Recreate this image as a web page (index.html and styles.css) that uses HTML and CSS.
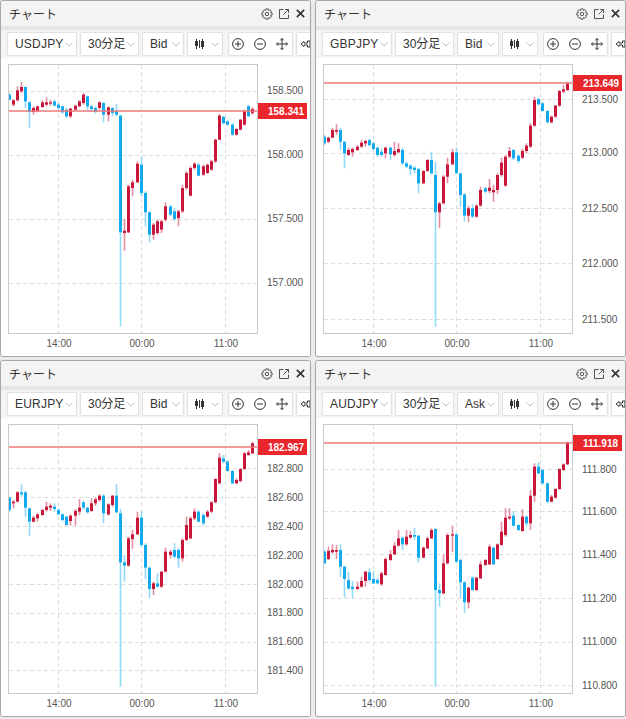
FILE: index.html
```html
<!DOCTYPE html>
<html lang="ja">
<head>
<meta charset="utf-8">
<title>チャート</title>
<link rel="stylesheet" href="styles.css">
</head>
<body>
<svg class="sprite" xmlns="http://www.w3.org/2000/svg">
  <symbol id="i-gear" viewBox="0 0 12 12">
    <polygon points="9.67,4.67 11.09,4.92 11.09,7.08 9.67,7.33 9.53,7.65 10.36,8.83 8.83,10.36 7.65,9.53 7.33,9.67 7.08,11.09 4.92,11.09 4.67,9.67 4.35,9.53 3.17,10.36 1.64,8.83 2.47,7.65 2.33,7.33 0.91,7.08 0.91,4.92 2.33,4.67 2.47,4.35 1.64,3.17 3.17,1.64 4.35,2.47 4.67,2.33 4.92,0.91 7.08,0.91 7.33,2.33 7.65,2.47 8.83,1.64 10.36,3.17 9.53,4.35" fill="none" stroke="currentColor" stroke-width="1" stroke-linejoin="round"/>
    <circle cx="6" cy="6" r="1.7" fill="none" stroke="currentColor" stroke-width="1"/>
  </symbol>
  <symbol id="i-pop" viewBox="0 0 12 12">
    <path d="M5.5 1.5H1.5V10.5H10.5V6.5" fill="none" stroke="currentColor" stroke-width="1"/>
    <path d="M5.5 6.5L10.5 1.5M7 1.5H10.5V5" fill="none" stroke="currentColor" stroke-width="1"/>
  </symbol>
  <symbol id="i-close" viewBox="0 0 12 12">
    <path d="M2 2L10 10M10 2L2 10" fill="none" stroke="currentColor" stroke-width="1.8"/>
  </symbol>
  <symbol id="i-chev" viewBox="0 0 8 5">
    <polyline points="0.5,0.5 4,4 7.5,0.5" fill="none" stroke="currentColor" stroke-width="1"/>
  </symbol>
  <symbol id="i-candles" viewBox="0 0 9 10">
    <path d="M1.5 0V10M4.5 1V9M7.5 0V10" stroke="currentColor" stroke-width="1"/>
    <rect x="0" y="2" width="3" height="5" fill="currentColor"/>
    <rect x="4" y="3" width="1" height="4" fill="currentColor"/>
    <rect x="6" y="2" width="3" height="6" fill="currentColor"/>
  </symbol>
  <symbol id="i-plus" viewBox="0 0 12 12">
    <circle cx="6" cy="6" r="5.4" fill="none" stroke="currentColor" stroke-width="1"/>
    <path d="M3 6H9M6 3V9" stroke="currentColor" stroke-width="1"/>
  </symbol>
  <symbol id="i-minus" viewBox="0 0 12 12">
    <circle cx="6" cy="6" r="5.4" fill="none" stroke="currentColor" stroke-width="1"/>
    <path d="M3 6H9" stroke="currentColor" stroke-width="1"/>
  </symbol>
  <symbol id="i-move" viewBox="0 0 12 12">
    <path d="M6 0.5V11.5M0.5 6H11.5M4.3 2.2L6 0.5L7.7 2.2M4.3 9.8L6 11.5L7.7 9.8M2.2 4.3L0.5 6L2.2 7.7M9.8 4.3L11.5 6L9.8 7.7" fill="none" stroke="currentColor" stroke-width="1"/>
  </symbol>
  <symbol id="i-pin" viewBox="0 0 12 12">
    <path d="M1 6L4 3.5V5H7.5V3L10 3V9H7.5V7H4V8.5Z" fill="none" stroke="currentColor" stroke-width="1" stroke-linejoin="round"/>
  </symbol>
</svg>

<main class="board">
  <section class="panel">
    <header class="titlebar">
      <span class="title">チャート</span>
      <div class="title-tools">
        <svg class="ico ico-gear"><use href="#i-gear"/></svg>
        <svg class="ico ico-pop"><use href="#i-pop"/></svg>
        <svg class="ico ico-close"><use href="#i-close"/></svg>
      </div>
    </header>
    <div class="strip"></div>
    <div class="toolbar">
      <div class="btn btn-sym"><span class="btn-text sym">USDJPY</span><svg class="chev"><use href="#i-chev"/></svg></div>
      <div class="btn btn-tf"><span class="btn-text">30分足</span><svg class="chev"><use href="#i-chev"/></svg></div>
      <div class="btn btn-side"><span class="btn-text">Bid</span><svg class="chev"><use href="#i-chev"/></svg></div>
      <div class="btn btn-type"><svg class="ico-candles"><use href="#i-candles"/></svg><svg class="chev"><use href="#i-chev"/></svg></div>
      <div class="btn btn-tools"><svg class="tool"><use href="#i-plus"/></svg><svg class="tool"><use href="#i-minus"/></svg><svg class="tool"><use href="#i-move"/></svg></div>
      <div class="btn btn-more"><svg class="tool"><use href="#i-pin"/></svg></div>
    </div>
    <div class="chart-area"><svg class="chart" data-chart="0" width="302" height="290"></svg></div>
  </section>

  <section class="panel">
    <header class="titlebar">
      <span class="title">チャート</span>
      <div class="title-tools">
        <svg class="ico ico-gear"><use href="#i-gear"/></svg>
        <svg class="ico ico-pop"><use href="#i-pop"/></svg>
        <svg class="ico ico-close"><use href="#i-close"/></svg>
      </div>
    </header>
    <div class="strip"></div>
    <div class="toolbar">
      <div class="btn btn-sym"><span class="btn-text sym">GBPJPY</span><svg class="chev"><use href="#i-chev"/></svg></div>
      <div class="btn btn-tf"><span class="btn-text">30分足</span><svg class="chev"><use href="#i-chev"/></svg></div>
      <div class="btn btn-side"><span class="btn-text">Bid</span><svg class="chev"><use href="#i-chev"/></svg></div>
      <div class="btn btn-type"><svg class="ico-candles"><use href="#i-candles"/></svg><svg class="chev"><use href="#i-chev"/></svg></div>
      <div class="btn btn-tools"><svg class="tool"><use href="#i-plus"/></svg><svg class="tool"><use href="#i-minus"/></svg><svg class="tool"><use href="#i-move"/></svg></div>
      <div class="btn btn-more"><svg class="tool"><use href="#i-pin"/></svg></div>
    </div>
    <div class="chart-area"><svg class="chart" data-chart="1" width="302" height="290"></svg></div>
  </section>

  <section class="panel">
    <header class="titlebar">
      <span class="title">チャート</span>
      <div class="title-tools">
        <svg class="ico ico-gear"><use href="#i-gear"/></svg>
        <svg class="ico ico-pop"><use href="#i-pop"/></svg>
        <svg class="ico ico-close"><use href="#i-close"/></svg>
      </div>
    </header>
    <div class="strip"></div>
    <div class="toolbar">
      <div class="btn btn-sym"><span class="btn-text sym">EURJPY</span><svg class="chev"><use href="#i-chev"/></svg></div>
      <div class="btn btn-tf"><span class="btn-text">30分足</span><svg class="chev"><use href="#i-chev"/></svg></div>
      <div class="btn btn-side"><span class="btn-text">Bid</span><svg class="chev"><use href="#i-chev"/></svg></div>
      <div class="btn btn-type"><svg class="ico-candles"><use href="#i-candles"/></svg><svg class="chev"><use href="#i-chev"/></svg></div>
      <div class="btn btn-tools"><svg class="tool"><use href="#i-plus"/></svg><svg class="tool"><use href="#i-minus"/></svg><svg class="tool"><use href="#i-move"/></svg></div>
      <div class="btn btn-more"><svg class="tool"><use href="#i-pin"/></svg></div>
    </div>
    <div class="chart-area"><svg class="chart" data-chart="2" width="302" height="290"></svg></div>
  </section>

  <section class="panel">
    <header class="titlebar">
      <span class="title">チャート</span>
      <div class="title-tools">
        <svg class="ico ico-gear"><use href="#i-gear"/></svg>
        <svg class="ico ico-pop"><use href="#i-pop"/></svg>
        <svg class="ico ico-close"><use href="#i-close"/></svg>
      </div>
    </header>
    <div class="strip"></div>
    <div class="toolbar">
      <div class="btn btn-sym"><span class="btn-text sym">AUDJPY</span><svg class="chev"><use href="#i-chev"/></svg></div>
      <div class="btn btn-tf"><span class="btn-text">30分足</span><svg class="chev"><use href="#i-chev"/></svg></div>
      <div class="btn btn-side"><span class="btn-text">Ask</span><svg class="chev"><use href="#i-chev"/></svg></div>
      <div class="btn btn-type"><svg class="ico-candles"><use href="#i-candles"/></svg><svg class="chev"><use href="#i-chev"/></svg></div>
      <div class="btn btn-tools"><svg class="tool"><use href="#i-plus"/></svg><svg class="tool"><use href="#i-minus"/></svg><svg class="tool"><use href="#i-move"/></svg></div>
      <div class="btn btn-more"><svg class="tool"><use href="#i-pin"/></svg></div>
    </div>
    <div class="chart-area"><svg class="chart" data-chart="3" width="302" height="290"></svg></div>
  </section>
</main>
<script src="script.js"></script>
</body>
</html>
```

FILE: styles.css
```css
* { box-sizing: border-box; }

body {
  margin: 0;
  background: #ececec;
  font-family: "Liberation Sans", Arial, "Noto Sans CJK JP", sans-serif;
  color: #333;
}

.sprite { display: none; }

.board {
  display: grid;
  grid-template-columns: 311px 311px;
  grid-auto-rows: 357px;
  column-gap: 4px;
  row-gap: 3px;
}

.panel {
  display: flex;
  flex-direction: column;
  border: 1px solid #a7a7a7;
  border-radius: 3px;
  background: #fff;
  overflow: hidden;
  box-shadow: 0 0 1px rgba(0, 0, 0, 0.15);
}

.titlebar {
  flex: 0 0 25px;
  display: flex;
  align-items: center;
  padding: 0 4px 0 8px;
  background: #f3f3f3;
}

.title {
  font-family: "Noto Sans CJK JP", sans-serif;
  font-size: 12px;
  color: #333;
  line-height: 1;
}

.title-tools {
  margin-left: auto;
  display: flex;
  align-items: center;
  gap: 5px;
}

.ico {
  width: 12px;
  height: 12px;
  color: #555;
}

.ico-close { color: #333; width: 11px; height: 11px; }

.strip {
  flex: 0 0 4px;
  background: #e5e5e5;
}

.toolbar {
  flex: 0 0 28px;
  display: flex;
  align-items: center;
  padding: 2px 0 2px 6px;
  background: #f5f5f5;
  overflow: hidden;
  white-space: nowrap;
}

.btn {
  flex: 0 0 auto;
  height: 24px;
  display: flex;
  align-items: center;
  justify-content: space-between;
  padding: 0 3px 0 7px;
  margin-right: 3px;
  border: 1px solid #e1e1e1;
  border-radius: 2px;
  background: #fff;
  font-size: 12px;
  color: #333;
}

.btn-text { line-height: 1; }
.sym { letter-spacing: 0.2px; }

.btn-sym { width: 70px; }
.btn-tf { width: 59px; }
.btn-side { width: 42px; }
.btn-type { width: 36px; margin-right: 5px; }
.btn-tools {
  width: 65px;
  justify-content: flex-start;
  gap: 10px;
  padding-left: 3px;
}
.btn-more {
  width: 30px;
  justify-content: flex-start;
  padding-left: 3px;
}

.chev {
  width: 8px;
  height: 5px;
  color: #bcbcbc;
}

.ico-candles {
  width: 9px;
  height: 10px;
  color: #333;
}

.tool {
  width: 12px;
  height: 12px;
  color: #333;
}

.chart-area {
  flex: 1 1 auto;
  padding: 6px 0 0 7px;
  background: #fff;
}

.chart { display: block; overflow: hidden; }

.plot { fill: #fff; }
.frame { fill: none; stroke: #c9c9c9; stroke-width: 1; }

.grid-line {
  stroke: #dedede;
  stroke-width: 1;
  stroke-dasharray: 4 3;
}

.wick { stroke-width: 1.6; }
.wick.up { stroke: #e58ea1; }
.wick.down { stroke: #92d9f8; }
.body.up { fill: #c8173b; }
.body.down { fill: #14a9ec; }

.last-line { stroke: #ef7a7a; stroke-width: 1.5; }

.axis {
  font-family: "Liberation Sans", Arial, sans-serif;
  font-size: 10px;
  fill: #555;
}

.badge { fill: #e8262c; }

.badge-text {
  font-family: "Liberation Sans", Arial, sans-serif;
  font-size: 10px;
  font-weight: bold;
  fill: #fff;
}
```

FILE: script.js
```js
// Candle data: [up, bodyTop, bodyBottom, wickTop, wickBottom] in 1/3-pixel plot units.
const CHARTS = [
  {
    top: 13,
    levels: [[26.7, '158.500'], [90.7, '158.000'], [154.7, '157.500'], [218.7, '157.000']],
    last: [46.7, '158.341'],
    candles: [
      [0,105,120,100,122],[1,122,135,118,140],[1,92,122,80,125],[1,82,95,67,100],[0,82,125,80,145],
      [0,128,157,125,205],[1,145,157,140,165],[1,140,155,138,158],[1,128,142,122,145],[1,128,135,113,140],
      [1,128,132,120,138],[0,125,138,120,140],[0,135,145,130,150],[0,140,158,138,162],[0,150,170,145,175],
      [1,147,170,145,175],[1,138,150,135,152],[1,125,140,122,142],[1,105,130,100,135],[0,110,140,108,155],
      [0,140,148,135,155],[0,145,157,140,162],[1,128,145,125,150],[0,130,165,128,188],[1,143,165,140,185],
      [0,145,160,143,170],[0,155,165,133,170],[0,168,518,165,800],[1,513,520,478,573],[1,380,518,375,520],
      [1,368,385,360,410],[1,312,368,305,370],[0,315,400,290,410],[0,400,458,395,500],[0,458,525,455,548],
      [1,495,525,490,540],[1,485,520,480,525],[1,485,510,480,520],[1,440,480,428,485],[0,440,465,435,470],
      [0,455,478,445,485],[1,455,475,450,500],[1,385,455,375,460],[1,340,385,335,390],[1,325,408,320,410],
      [1,312,325,308,330],[0,315,348,310,350],[1,320,345,315,348],[1,315,340,312,342],[1,305,330,300,333],
      [1,240,305,238,310],[1,168,240,162,242],[0,172,190,168,195],[0,185,195,182,198],[0,195,225,190,228],
      [1,208,225,205,228],[1,180,210,178,212],[1,155,195,150,198],[0,140,170,135,172],[1,148,160,143,165]
    ]
  },
  {
    top: 7,
    levels: [[35, '213.500'], [88.7, '213.000'], [144.3, '212.500'], [199.3, '212.000'], [255, '211.500']],
    last: [18.7, '213.649'],
    candles: [
      [0,225,245,220,250],[1,228,240,225,245],[1,205,228,198,230],[1,205,210,188,220],[0,205,240,200,265],
      [0,240,275,240,320],[1,265,280,258,282],[1,262,272,258,285],[1,255,265,250,268],[1,243,255,235,258],
      [1,238,245,235,255],[0,235,250,232,255],[0,245,262,240,265],[0,258,280,255,285],[0,270,280,260,285],
      [1,258,275,255,290],[0,258,278,255,295],[1,268,280,240,285],[1,262,272,245,275],[0,265,305,258,310],
      [0,305,315,300,320],[0,312,322,308,340],[0,318,325,312,335],[0,322,365,318,395],[1,328,365,325,368],
      [1,295,328,292,330],[0,295,335,270,338],[0,340,452,300,795],[1,425,452,420,500],[1,345,425,340,428],
      [1,308,345,288,365],[1,272,308,262,310],[0,272,335,258,338],[0,335,400,333,435],[0,398,462,395,480],
      [1,440,462,432,482],[0,440,465,428,468],[1,432,465,428,468],[1,385,432,375,435],[0,380,390,375,395],
      [1,378,388,352,395],[1,385,392,370,420],[1,340,385,335,398],[1,303,340,288,345],[1,285,372,280,375],
      [1,268,285,255,290],[0,265,290,262,295],[0,282,298,278,305],[1,268,288,262,292],[1,252,268,245,275],
      [1,192,255,185,258],[1,115,192,105,195],[0,112,128,108,132],[0,125,148,122,150],[0,148,182,145,185],
      [1,165,182,162,185],[1,132,165,130,168],[1,88,132,85,135],[1,83,90,70,95],[1,65,85,60,88]
    ]
  },
  {
    top: 7,
    levels: [[44.3, '182.800'], [73.3, '182.600'], [102, '182.400'], [131, '182.200'], [160, '182.000'],
             [188.7, '181.800'], [217.7, '181.600'], [246, '181.400']],
    last: [21, '182.967'],
    candles: [
      [0,228,265,225,270],[1,240,245,235,260],[1,212,240,208,242],[0,212,218,188,225],[0,212,258,208,285],
      [0,260,300,258,342],[1,288,300,283,302],[1,278,290,275,300],[1,265,280,262,282],[1,255,265,240,270],
      [1,252,258,245,268],[0,255,262,245,270],[0,265,278,260,280],[0,278,295,275,300],[0,285,310,282,312],
      [1,282,298,278,312],[1,268,282,262,312],[1,258,270,232,280],[0,242,258,238,265],[0,258,272,255,275],
      [1,245,268,230,270],[1,233,245,228,252],[1,222,235,218,240],[0,222,275,218,305],[1,248,278,245,282],
      [1,222,250,220,255],[0,222,272,188,275],[0,275,422,262,795],[0,422,432,400,480],[1,350,432,345,435],
      [1,338,352,325,382],[1,288,338,270,340],[0,288,370,268,375],[0,370,438,365,472],[0,438,502,435,530],
      [1,485,502,480,520],[0,485,495,455,498],[1,450,495,448,498],[1,390,450,378,452],[1,390,400,385,410],
      [0,385,405,365,410],[0,385,410,380,438],[1,355,410,350,420],[1,310,355,285,358],[1,290,350,285,352],
      [1,270,290,260,295],[0,270,300,265,302],[0,280,305,275,312],[1,270,285,265,288],[1,242,270,238,275],
      [1,172,242,170,245],[1,108,185,95,188],[0,110,120,100,125],[0,120,148,115,150],[0,148,185,145,188],
      [1,175,185,170,188],[1,142,178,140,182],[1,95,142,90,145],[1,92,100,85,102],[1,65,95,60,98]
    ]
  },
  {
    top: 7,
    levels: [[45, '111.800'], [87, '111.600'], [130.3, '111.400'], [174.3, '111.200'], [217.7, '111.000'], [261, '110.800']],
    last: [18.7, '111.918'],
    candles: [
      [0,390,425,385,428],[1,388,412,375,415],[1,385,392,368,395],[1,385,390,370,412],[0,385,435,368,465],
      [0,435,472,432,528],[0,475,500,450,505],[0,495,502,478,530],[1,495,502,480,505],[1,478,495,465,498],
      [1,450,478,448,495],[0,452,475,440,480],[0,472,485,448,488],[0,475,485,468,488],[1,455,488,450,492],
      [1,412,460,408,462],[1,398,415,385,418],[1,372,398,362,400],[1,350,372,325,375],[0,348,368,345,385],
      [1,345,368,325,372],[1,340,348,328,350],[0,340,345,318,355],[0,342,408,340,422],[1,378,408,375,410],
      [1,350,380,345,382],[1,325,350,320,352],[0,322,505,320,795],[0,505,515,485,555],[1,425,515,398,518],
      [1,340,425,335,428],[1,338,342,312,392],[0,338,420,335,425],[0,415,482,410,530],[0,482,542,478,575],
      [1,498,542,495,560],[0,468,505,465,508],[1,468,505,465,508],[1,428,470,418,472],[1,415,430,412,432],
      [1,375,428,368,430],[0,378,428,375,430],[1,368,412,365,415],[1,330,370,300,372],[1,288,340,260,345],
      [1,285,290,260,295],[0,282,312,268,315],[0,310,325,308,328],[1,285,328,262,330],[0,285,305,282,315],
      [1,222,305,205,325],[1,135,222,125,240],[0,135,155,122,158],[0,145,185,142,190],[0,185,240,182,245],
      [1,225,240,220,242],[1,202,228,198,230],[1,142,202,140,205],[1,128,145,125,148],[1,62,128,60,130]
    ]
  }
];

const W = 250, H = 270, STEP = 4.13;
const TIMES = [[50, '14:00'], [133, '00:00'], [217, '11:00']];

function renderChart(svg, c, idx) {
  const py = v => ((v - c.top) / 3).toFixed(2);
  let s = '';
  s += `<defs><clipPath id="clip${idx}"><rect x="1" y="1" width="${W - 2}" height="${H - 2}"/></clipPath></defs>`;
  s += `<rect class="plot" x="0" y="0" width="${W}" height="${H}"/>`;
  c.levels.forEach(([ly]) => {
    const yy = Math.round(ly) + 0.5;
    s += `<line class="grid-line" x1="1" x2="${W - 1}" y1="${yy}" y2="${yy}"/>`;
  });
  TIMES.forEach(([x]) => {
    s += `<line class="grid-line" x1="${x + 0.5}" x2="${x + 0.5}" y1="1" y2="${H - 1}"/>`;
  });
  s += `<g clip-path="url(#clip${idx})">`;
  c.candles.forEach((k, i) => {
    const [up, bt, bb, wt, wb] = k;
    const left = Math.round(1 + i * STEP - 1.5);
    const cls = up ? 'up' : 'down';
    const t = (bt - c.top) / 3, b = (bb - c.top) / 3;
    s += `<line class="wick ${cls}" x1="${left + 1.5}" x2="${left + 1.5}" y1="${py(wt)}" y2="${py(wb)}"/>`;
    s += `<rect class="body ${cls}" x="${left}" y="${t.toFixed(2)}" width="3" height="${Math.max(1, b - t).toFixed(2)}"/>`;
  });
  s += `</g>`;
  const ly = 2 * Math.round(c.last[0] / 2) + 1;
  s += `<path class="last-line" fill="none" d="M1 ${ly}H${W}"/>`;
  s += `<rect class="frame" x="0.5" y="0.5" width="${W - 1}" height="${H - 1}"/>`;
  c.levels.forEach(([y, t]) => {
    s += `<text class="axis" x="259" y="${(y + 3.6).toFixed(1)}">${t}</text>`;
  });
  s += `<rect class="badge" x="${W}" y="${ly - 8}" width="49" height="16"/>`;
  s += `<text class="badge-text" x="260" y="${(ly + 3.6).toFixed(1)}">${c.last[1]}</text>`;
  TIMES.forEach(([x, t]) => {
    s += `<text class="axis" x="${x + 1}" y="${H + 12.5}" text-anchor="middle">${t}</text>`;
  });
  svg.innerHTML = s;
}

document.querySelectorAll('svg.chart').forEach(svg => {
  const idx = Number(svg.dataset.chart);
  renderChart(svg, CHARTS[idx], idx);
});
```
